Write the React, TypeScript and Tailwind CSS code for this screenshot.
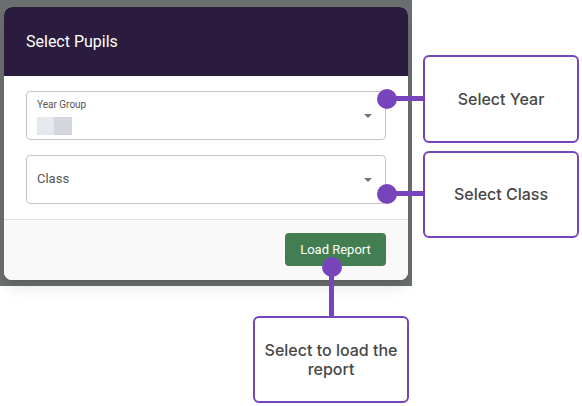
const PURPLE = "#7744bb";

function Select({ label, small }: { label: string; small?: boolean }) {
  return (
    <div className="relative h-[49px] rounded border border-[#c4c4c4] bg-white pl-[10px] pr-[13px] flex items-center">
      {small ? (
        <div className="flex flex-col pt-[2px]">
          <span className="text-[10px] leading-[12px] text-[#555]">{label}</span>
          <div className="mt-[6px] flex">
            <div className="w-[17px] h-[18px] bg-[#e5e8ec]" />
            <div className="w-[18px] h-[18px] bg-[#d3d6de]" />
          </div>
        </div>
      ) : (
        <span className="text-[13px] leading-[16px] text-[#555] -mt-[2px]">{label}</span>
      )}
      <div className="ml-auto w-0 h-0 border-x-[4px] border-x-transparent border-t-[4px] border-t-[#757575]" />
    </div>
  );
}

function Callout({ children, className }: { children: React.ReactNode; className: string }) {
  return (
    <div
      className={`absolute flex items-center justify-center text-center rounded-md border-2 border-[#7744bb] bg-white text-[16px] leading-[19px] font-medium text-[#474747] ${className}`}
      style={{ fontFamily: "Inter, sans-serif" }}
    >
      {children}
    </div>
  );
}

export default function App() {
  return (
    <div className="relative w-[582px] h-[406px] bg-white" style={{ fontFamily: "Roboto, sans-serif" }}>
      <div className="w-[412px] h-[286px] bg-[#6b6e6e] pt-[7px] pl-[4px]">
        <div className="w-[404px] h-[273px] rounded-lg overflow-hidden bg-white flex flex-col shadow-lg">
          <div className="h-[69px] bg-[#2b1b3e] px-[22px] flex items-center text-white text-[16px]">
            Select Pupils
          </div>
          <div className="px-[22px] pt-[15px] pb-[15px] flex flex-col gap-[15px] border-b border-[#e2e2e2]">
            <Select label="Year Group" small />
            <Select label="Class" />
          </div>
          <div className="flex-1 bg-[#f9f9f9] flex justify-end items-start pt-[13px] px-[22px]">
            <button className="w-[101px] h-[33px] rounded bg-[#437e53] text-white text-[13px]">
              Load Report
            </button>
          </div>
        </div>
      </div>

      {/* connectors */}
      <div className="absolute left-[377px] top-[89px] w-[20px] h-[20px] rounded-full" style={{ background: PURPLE }} />
      <div className="absolute left-[387px] top-[96px] w-[37px] h-[5px]" style={{ background: PURPLE }} />
      <div className="absolute left-[377px] top-[184px] w-[20px] h-[20px] rounded-full" style={{ background: PURPLE }} />
      <div className="absolute left-[387px] top-[191px] w-[37px] h-[5px]" style={{ background: PURPLE }} />
      <div className="absolute left-[322px] top-[257px] w-[20px] h-[20px] rounded-full" style={{ background: PURPLE }} />
      <div className="absolute left-[329px] top-[267px] w-[5px] h-[50px]" style={{ background: PURPLE }} />

      <Callout className="left-[423px] top-[55px] w-[156px] h-[88px]">Select Year</Callout>
      <Callout className="left-[423px] top-[151px] w-[156px] h-[87px]">Select Class</Callout>
      <Callout className="left-[253px] top-[316px] w-[156px] h-[87px] px-[8px]">Select to load the report</Callout>
    </div>
  );
}
